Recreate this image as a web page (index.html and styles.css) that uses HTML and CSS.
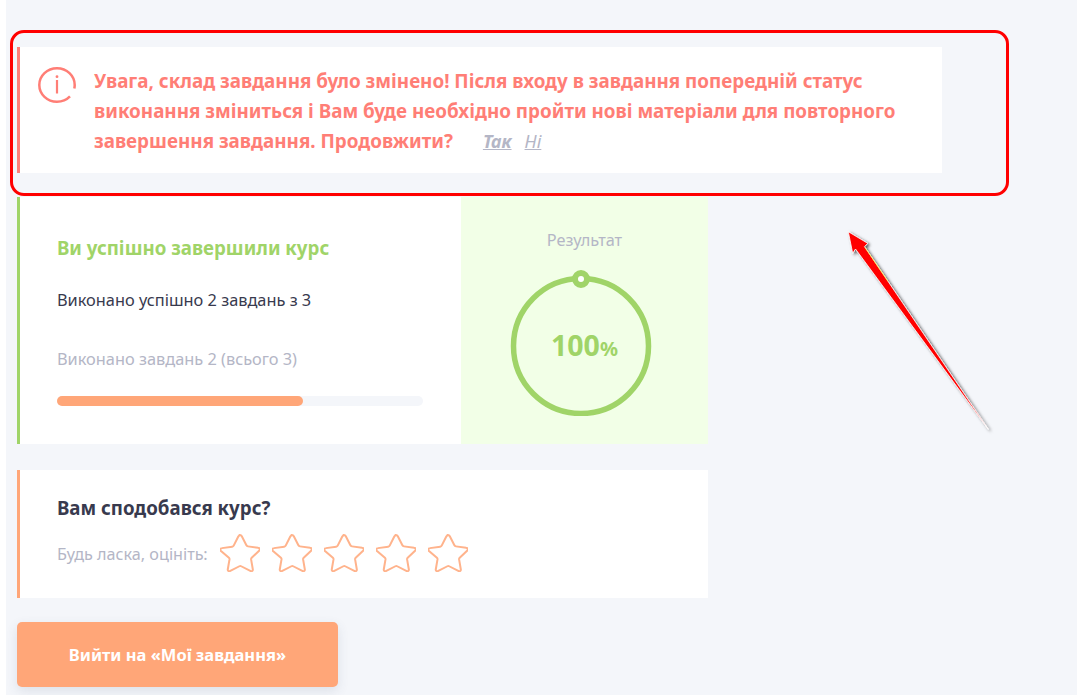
FILE: index.html
```html
<!DOCTYPE html>
<html lang="uk">
<head>
<meta charset="utf-8">
<title>Результат курсу</title>
<link rel="stylesheet" href="styles.css">
</head>
<body>
<svg class="sprite" width="0" height="0" aria-hidden="true"><defs><path id="star-shape" d="M20 2.500c.9 0 1.400.5 1.800 1.300l4.600 9.300c.3.600.8 1 1.500 1.100l10.200 1.500c1.700.2 2.200 1.800 1 3l-7.400 7.200c-.5.500-.7 1-.6 1.700l1.700 10.100c.3 1.700-1 2.500-2.500 1.700l-9.100-4.800c-.6-.3-1.200-.3-1.800 0l-9.100 4.800c-1.500.8-2.800 0-2.500-1.700l1.700-10.100c.1-.7-.1-1.200-.6-1.700L1 19c-1.200-1.200-.7-2.800 1-3l10.200-1.500c.7-.1 1.200-.5 1.500-1.100l4.600-9.300c.4-.8.900-1.300 1.800-1.300z"/></defs></svg>
<main class="page">
  <section class="alert">
    <svg class="alert-icon" width="38" height="36" viewBox="0 0 38 36" fill="none"><ellipse cx="19" cy="18" rx="17.700" ry="16.700" pathLength="360" stroke="#ff7e76" stroke-width="2.500" stroke-dasharray="12 30 318 0"/><circle cx="19" cy="9.700" r="1.400" fill="#ff7e76"/><path d="M19 13V26.500" stroke="#ff7e76" stroke-width="2.200"/></svg>
    <div class="alert-body">
      <p class="alert-text">Увага, склад завдання було змінено! Після входу в завдання попередній статус виконання зміниться і Вам буде необхідно пройти нові матеріали для повторного</p>
      <p class="alert-text"><span>завершення завдання. Продовжити?</span><a class="link-yes" href="#">Так</a><a class="link-no" href="#">Ні</a></p>
    </div>
  </section>
  <section class="result">
    <div class="result-info">
      <h2 class="result-title">Ви успішно завершили курс</h2>
      <p class="result-done">Виконано успішно 2 завдань з 3</p>
      <p class="result-count">Виконано завдань 2 (всього 3)</p>
      <div class="progress"><div class="progress-fill" style="width:67.200%"></div></div>
    </div>
    <div class="result-score">
      <div class="score-label">Результат</div>
      <div class="ring">
        <svg class="ring-svg" width="144" height="146" viewBox="0 0 144 146" fill="none"><circle cx="72" cy="76" r="67.500" stroke="#a0d468" stroke-width="5.500"/><circle cx="72" cy="9" r="6" fill="#fff" stroke="#a0d468" stroke-width="6"/></svg>
        <div class="ring-value">100<span class="ring-pct">%</span></div>
      </div>
    </div>
  </section>
  <section class="rating">
    <h3 class="rating-title">Вам сподобався курс?</h3>
    <div class="rating-row">
      <span class="rating-label">Будь ласка, оцініть:</span>
      <div class="stars">
        <svg class="star" width="40" height="38" viewBox="0 1.500 40 39" preserveAspectRatio="none" fill="none"><use href="#star-shape"/></svg>
        <svg class="star" width="40" height="38" viewBox="0 1.500 40 39" preserveAspectRatio="none" fill="none"><use href="#star-shape"/></svg>
        <svg class="star" width="40" height="38" viewBox="0 1.500 40 39" preserveAspectRatio="none" fill="none"><use href="#star-shape"/></svg>
        <svg class="star" width="40" height="38" viewBox="0 1.500 40 39" preserveAspectRatio="none" fill="none"><use href="#star-shape"/></svg>
        <svg class="star" width="40" height="38" viewBox="0 1.500 40 39" preserveAspectRatio="none" fill="none"><use href="#star-shape"/></svg>
      </div>
    </div>
  </section>
  <a class="exit-btn" href="#">Вийти на «Мої завдання»</a>
</main>
<div class="annot-box"></div>
<svg class="annot-arrow" width="155" height="210" viewBox="0 0 155 210" fill="none">
  <defs><filter id="arrow-shadow" x="-20%" y="-20%" width="140%" height="140%"><feDropShadow dx="2" dy="1.500" stdDeviation="1.500" flood-color="#000" flood-opacity=".65"/></filter></defs>
  <path d="M146.300 200.300L13.500 20 10.700 24.300 6.300 2.700 25.700 14.300 22.500 17.700z" fill="#f00" stroke="#fff" stroke-width=".8" filter="url(#arrow-shadow)"/>
  <path d="M23 18.500L46 52.500" stroke="#ff0" stroke-width=".5"/>
</svg>
</body>
</html>
```
FILE: styles.css
```css
* { box-sizing: border-box; }
html, body { margin: 0; height: 100%; }
body {
  position: relative;
  height: 695px;
  overflow: hidden;
  background: #fff;
  font-family: "Noto Sans", "Open Sans", sans-serif;
}
.sprite { position: absolute; }
.page {
  height: 695px;
  margin-left: 6px;
  padding: 47px 0 0 11px;
  background: #f4f6fa;
  display: flex;
  flex-direction: column;
  align-items: flex-start;
}
.alert {
  width: 925px;
  height: 126px;
  background: #fff;
  border-left: 3px solid #ff7e76;
  display: flex;
  padding: 19px 20px 0 18px;
  gap: 18px;
}
.alert-icon { flex: none; margin-top: 1px; }
.alert-body { flex: 1; }
.alert-text {
  margin: 0;
  font-size: 18.820px;
  font-weight: 700;
  line-height: 30px;
  color: #ff7e76;
}
.link-yes, .link-no {
  font-size: 18px;
  font-style: italic;
  color: #b4b6c6;
  text-decoration: underline;
}
.link-yes { font-weight: 700; margin-left: 30px; }
.link-no { font-weight: 400; margin-left: 13px; }
.result {
  width: 691px;
  height: 247px;
  margin-top: 24px;
  display: flex;
  background: #fff;
  border-left: 3px solid #a0d468;
}
.result-info {
  width: 441px;
  padding: 38px 38px 0 37px;
}
.result-title {
  margin: 0;
  font-size: 18.700px;
  font-weight: 700;
  line-height: 26px;
  color: #a0d468;
}
.result-done {
  margin: 28px 0 0;
  font-size: 16.350px;
  line-height: 22px;
  color: #383a4e;
}
.result-count {
  margin: 37px 0 0;
  font-size: 16.350px;
  line-height: 22px;
  color: #b4b6c6;
}
.progress {
  height: 10px;
  margin-top: 26px;
  border-radius: 5px;
  background: #f4f6fa;
}
.progress-fill {
  height: 100%;
  border-radius: 5px;
  background: #ffa678;
}
.result-score {
  width: 247px;
  background: #f2ffe7;
  display: flex;
  flex-direction: column;
  align-items: center;
  padding-top: 32px;
}
.score-label {
  font-size: 16.300px;
  line-height: 22px;
  color: #b4b6c6;
}
.ring {
  position: relative;
  width: 144px;
  height: 146px;
  margin: 19px 8px 0 0;
}
.ring-svg { display: block; }
.ring-value {
  position: absolute;
  left: 8px;
  right: 0;
  top: 57px;
  text-align: center;
  font-size: 28.500px;
  font-weight: 700;
  line-height: 36px;
  color: #a0d468;
}
.ring-pct { font-size: 20px; }
.rating {
  width: 691px;
  height: 128px;
  margin-top: 26px;
  padding: 25px 0 0 37px;
  background: #fff;
  border-left: 3px solid #ffa678;
}
.rating-title {
  margin: 0;
  font-size: 18.700px;
  font-weight: 700;
  line-height: 26px;
  color: #383a4e;
}
.rating-row {
  display: flex;
  align-items: center;
  margin-top: 13px;
}
.rating-label {
  margin-top: 2px;
  font-size: 16.200px;
  line-height: 22px;
  color: #b4b6c6;
}
.stars {
  display: flex;
  gap: 12px;
  margin-left: 12px;
}
.star {
  display: block;
  stroke: #ffb38c;
  stroke-width: 2;
}
.exit-btn {
  width: 321px;
  height: 65px;
  margin-top: 24px;
  display: flex;
  align-items: center;
  justify-content: center;
  border-radius: 5px;
  background: #ffa678;
  box-shadow: 0 4px 12px rgba(60, 70, 110, .12);
  color: #fff;
  font-size: 16.500px;
  font-weight: 700;
  text-decoration: none;
}
.annot-box {
  position: absolute;
  left: 10px;
  top: 30px;
  width: 999px;
  height: 166px;
  border: 3px solid #f00;
  border-radius: 14px;
}
.annot-arrow {
  position: absolute;
  left: 842px;
  top: 229px;
}
```
